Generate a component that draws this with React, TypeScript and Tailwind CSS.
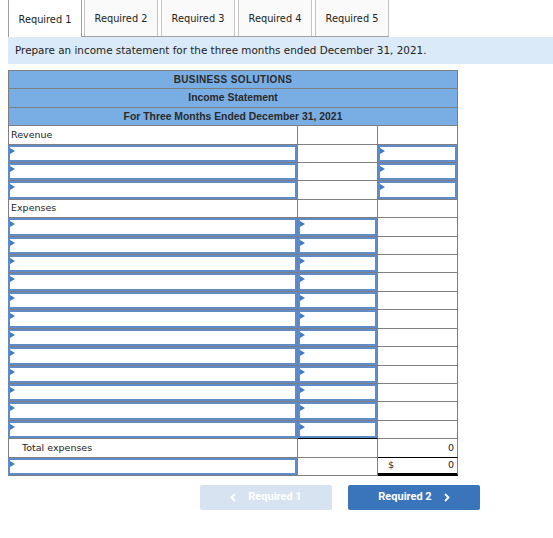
import React from "react";

const FONT = { fontFamily: '"DejaVu Sans", Verdana, sans-serif' };
const ARIAL = { fontFamily: '"Liberation Sans", Arial, sans-serif' };

function Marker() {
  return (
    <span className="absolute left-0 top-[1px] w-0 h-0 border-y-[3px] border-y-transparent border-l-[5px] border-l-[#3f7bc8]" />
  );
}

function InputBox({ marker = true, first = false }: { marker?: boolean; first?: boolean }) {
  return (
    <div className={`relative h-full border-2 border-[#5f8cc8] bg-white ${first ? "-ml-[1px]" : ""}`}>
      {marker && <Marker />}
    </div>
  );
}

type Cell = {
  kind: "empty" | "input" | "label";
  text?: string;
  extra?: string;
  first?: boolean;
};

function GridCell({ c, base }: { c: Cell; base: string }) {
  const cls = `${base} ${c.extra ?? ""}`;
  if (c.kind === "input")
    return (
      <div className={cls}>
        <InputBox first={c.first} />
      </div>
    );
  if (c.kind === "label")
    return (
      <div className={`${cls} flex items-center pl-[2px] text-[9.5px] text-[#222]`} style={FONT}>
        {c.text}
      </div>
    );
  return <div className={cls}></div>;
}

export default function App() {
  const cellBase = "border-r border-b border-[#7f7f7f]";
  type Row = [Cell, Cell, Cell];
  const E: Cell = { kind: "empty" };
  const I1: Cell = { kind: "input", first: true };
  const I: Cell = { kind: "input" };
  const rows: Row[] = [];
  rows.push([{ kind: "label", text: "Revenue" }, E, E]);
  for (let i = 0; i < 3; i++) rows.push([I1, E, I]);
  rows.push([{ kind: "label", text: "Expenses" }, E, E]);
  for (let i = 0; i < 12; i++)
    rows.push([I1, i === 11 ? { kind: "input", extra: "!border-b-black" } : I, E]);

  return (
    <div className="w-[553px] h-[538px] bg-white relative overflow-hidden" style={FONT}>
      {/* Tabs */}
      <div className="flex pl-[8px] h-[37px]">
        <div className="w-[74px] h-full pt-[3px] border-l border-r border-[#a0a0a0] bg-white flex items-center justify-center text-[9.8px] text-[#222]">
          Required 1
        </div>
        <div className="flex gap-[3px] border-b border-[#a0a0a0] pl-[2px] h-full">
          {["Required 2", "Required 3", "Required 4", "Required 5"].map((t) => (
            <div
              key={t}
              className="w-[74px] h-full pt-[3px] border-l border-r border-[#c4c4c4] bg-[#fafafa] flex items-center justify-center text-[9.8px] text-[#222]"
            >
              {t}
            </div>
          ))}
        </div>
      </div>

      {/* Instruction bar */}
      <div className="ml-[8px] h-[27px] bg-[#dbeaf8] flex items-center pl-[7px] text-[10.4px] text-[#222]">
        Prepare an income statement for the three months ended December 31, 2021.
      </div>

      {/* Table */}
      <div className="ml-[8px] mt-[6px] w-[450px] grid grid-cols-[289px_80px_80px] auto-rows-[18.41px] border-l border-t border-[#7f7f7f]">
        <div className={`${cellBase} col-span-3 bg-[#79aee4] flex items-center justify-center text-[10px] font-bold text-[#2a2a2a] tracking-[0.35px]`} style={ARIAL}>
          BUSINESS SOLUTIONS
        </div>
        <div className={`${cellBase} col-span-3 bg-[#79aee4] flex items-center justify-center text-[10.4px] font-bold text-[#2a2a2a]`} style={ARIAL}>
          Income Statement
        </div>
        <div className={`${cellBase} col-span-3 bg-[#79aee4] flex items-center justify-center text-[10.4px] font-bold text-[#2a2a2a]`} style={ARIAL}>
          For Three Months Ended December 31, 2021
        </div>
        {rows.map((r, ri) => (
          <React.Fragment key={ri}>
            <GridCell c={r[0]} base={cellBase} />
            <GridCell c={r[1]} base={cellBase} />
            <GridCell c={r[2]} base={cellBase} />
          </React.Fragment>
        ))}
        {/* Total expenses */}
        <div className={`${cellBase} flex items-center pl-[13px] text-[9.5px] text-[#222]`}>Total expenses</div>
        <div className={cellBase}></div>
        <div className={`${cellBase} !border-b-black flex items-center justify-end pr-[3px] text-[9.5px] text-[#222]`}>0</div>
        {/* Final row */}
        <div className={cellBase}>
          <InputBox first />
        </div>
        <div className={cellBase}></div>
        <div className={`${cellBase} !border-b-[3px] !border-b-black flex items-center justify-between pl-[10px] pr-[3px] text-[9.5px] text-[#222]`}>
          <span>$</span>
          <span>0</span>
        </div>
      </div>

      {/* Buttons */}
      <div className="flex gap-[16px] ml-[200px] mt-[9px]" style={{ fontFamily: 'Roboto, "Liberation Sans", Arial, sans-serif' }}>
        <div className="w-[132px] h-[25px] rounded-[2px] bg-[#d7e3f1] text-white text-[11px] font-bold flex items-center justify-center gap-[12px]">
          <svg width="6" height="9" viewBox="0 0 6 9">
            <path d="M5 1 L1.5 4.5 L5 8" stroke="white" strokeWidth="1.8" fill="none" />
          </svg>
          <span>Required 1</span>
        </div>
        <div className="w-[132px] h-[25px] rounded-[2px] bg-[#3a74ba] text-white text-[11px] font-bold flex items-center justify-center gap-[12px]">
          <span>Required 2</span>
          <svg width="6" height="9" viewBox="0 0 6 9">
            <path d="M1 1 L4.5 4.5 L1 8" stroke="white" strokeWidth="1.8" fill="none" />
          </svg>
        </div>
      </div>
    </div>
  );
}
